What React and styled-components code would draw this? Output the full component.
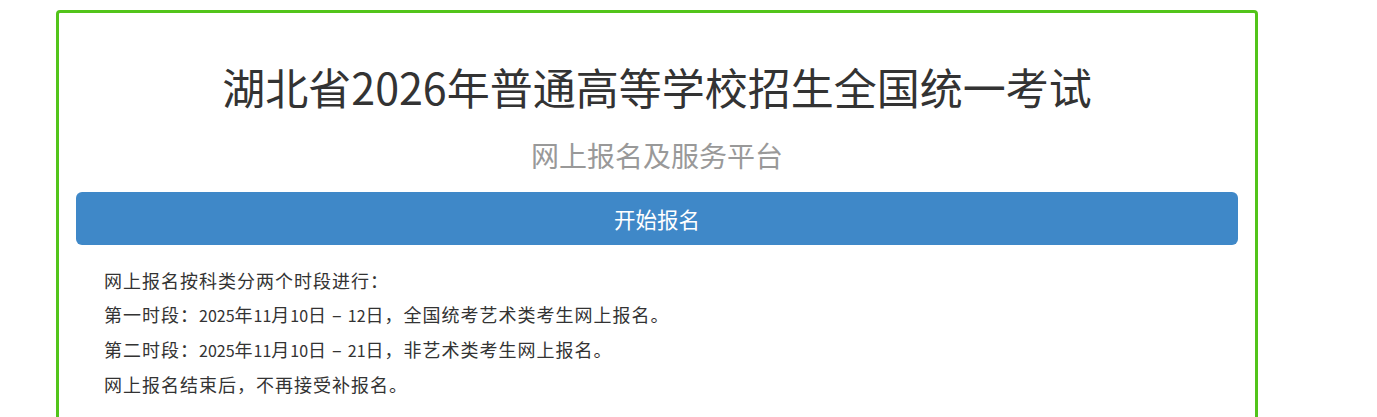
import styled, { createGlobalStyle } from 'styled-components';

const GlobalStyle = createGlobalStyle`
  html, body {
    margin: 0;
    padding: 0;
    background: #fff;
  }
  body {
    font-family: "Noto Sans CJK SC", "Noto Sans", sans-serif;
    color: #333;
  }
`;

const Page = styled.div`
  padding: 10px 0 0 56px;
`;

const Panel = styled.section`
  width: 1202px;
  box-sizing: border-box;
  border: 3px solid #52c41a;
  border-radius: 4px;
  padding: 0 17px 40px 17px;
`;

const Title = styled.h1`
  margin: 49px 0 0;
  font-size: 43px;
  line-height: 48px;
  font-weight: 400;
  color: #333;
  text-align: center;
`;

const Subtitle = styled.h2`
  margin: 25px 0 0;
  font-size: 28px;
  line-height: 40px;
  font-weight: 400;
  color: #999;
  text-align: center;
`;

const SignupButton = styled.button`
  display: block;
  width: 100%;
  height: 53px;
  margin-top: 17px;
  border: none;
  border-radius: 6px;
  background: #3f88c8;
  color: #fff;
  font-family: inherit;
  font-size: 21.5px;
  cursor: pointer;
`;

const Notice = styled.div`
  margin-top: 18px;
  padding-left: 28px;
`;

const NoticeLine = styled.p`
  margin: 0;
  font-size: 18px;
  line-height: 34px;
  letter-spacing: 1px;
  color: #333;
`;

// digits in the dates run narrower than the hanzi around them
const Num = styled.span`
  font-size: 16px;
  letter-spacing: 0;
`;

export default function App() {
  return (
    <>
      <GlobalStyle />
      <Page>
        <Panel>
          <Title>湖北省2026年普通高等学校招生全国统一考试</Title>
          <Subtitle>网上报名及服务平台</Subtitle>
          <SignupButton>开始报名</SignupButton>
          <Notice>
            <NoticeLine>网上报名按科类分两个时段进行：</NoticeLine>
            <NoticeLine>
              第一时段：<Num>2025</Num>年<Num>11</Num>月<Num>10</Num>日{' – '}<Num>12</Num>日，全国统考艺术类考生网上报名。
            </NoticeLine>
            <NoticeLine>
              第二时段：<Num>2025</Num>年<Num>11</Num>月<Num>10</Num>日{' – '}<Num>21</Num>日，非艺术类考生网上报名。
            </NoticeLine>
            <NoticeLine>网上报名结束后，不再接受补报名。</NoticeLine>
          </Notice>
        </Panel>
      </Page>
    </>
  );
}
